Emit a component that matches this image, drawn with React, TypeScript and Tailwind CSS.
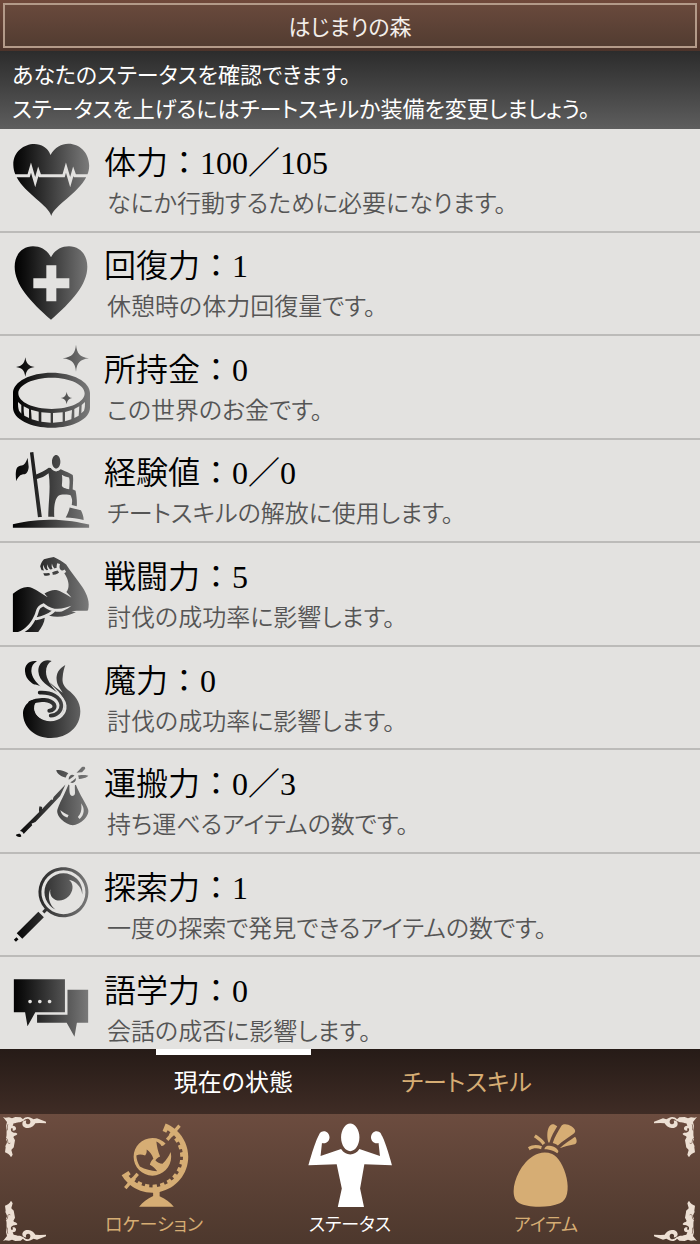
import { useState } from 'react'
import type { ReactNode } from 'react'
import {
  GiBiceps, GiBindle, GiConqueror, GiGlobe, GiHeartBeats,
  GiMagnifyingGlass, GiStrong, GiSwapBag, GiTalk,
} from 'react-icons/gi'

interface Stat {
  name: string
  value: string
  note: string
  icon: ReactNode
}

const INK = 'size-[82px] fill-[url(#ink)]'

// Shared gradients: one for the 512-unit icon set, one for the icons drawn here
function Gradients() {
  const stops = (
    <>
      <stop offset="0" stopColor="#000" />
      <stop offset="0.15" stopColor="#101010" />
      <stop offset="1" stopColor="#7c7c7c" />
    </>
  )
  return (
    <svg className="absolute size-0" aria-hidden="true">
      <defs>
        <linearGradient id="ink" gradientUnits="userSpaceOnUse" x1="10" y1="0" x2="500" y2="0">{stops}</linearGradient>
        <linearGradient id="inkSmall" gradientUnits="userSpaceOnUse" x1="15" y1="0" x2="245" y2="0">{stops}</linearGradient>
      </defs>
    </svg>
  )
}

function HeartPlusIcon() {
  return (
    <svg viewBox="0 0 246 246" className="size-[82px]">
      <path
        fill="url(#inkSmall)"
        fillRule="evenodd"
        d="M123 46C111 23 91 13 69 13 35 13 14 40 14 74c0 54 47 105 109 159 62-54 109-105 109-159 0-34-21-61-55-61-22 0-42 10-54 33ZM109 70h30v39h39v30h-39v39h-30v-39H70v-30h39Z"
      />
    </svg>
  )
}

function CoinIcon() {
  return (
    <svg viewBox="0 0 252 264" className="h-[88px] w-[84px] shrink-0">
      <g fill="url(#inkSmall)">
        <path d="M201 5c3 26 10 36 39 41-29 4-36 14-39 40-3-26-10-36-40-40 30-5 37-15 40-41Z" />
        <path d="M49 43c3 19 9 26 28 29-19 3-25 10-28 29-3-19-9-26-28-29 19-3 25-10 28-29Z" />
        <path d="M173 146c2 12 6 17 17 19-11 2-15 7-17 19-2-12-6-17-18-19 12-2 16-7 18-19Z" />
        <path
          fillRule="evenodd"
          d="M128 89c63 0 115 27 115 61v44c0 34-52 60-115 60S12 228 12 194v-44c0-34 53-61 116-61Zm0 15c-55 0-100 21-100 47 0 27 45 47 100 47s99-20 99-47c0-26-44-47-99-47Z"
        />
      </g>
      <g fill="#e3e2e0">
        <path d="M27 177 37 186v26l-7-9c-3-8-3-17-3-26Z" />
        <path d="M44 190l16 8v27l-14-7c-2-9-2-18-2-28Z" />
        <path d="M66 200l23 6v29l-21-6Z" />
        <path d="M97 208l28 2v29l-28-3Z" />
        <path d="M132 210l29-2v28l-29 3Z" />
        <path d="M168 207l21-6-2 28-19 6Z" />
        <path d="M196 198l15-8-2 28-13 7Z" />
        <path d="M218 186l10-9c0 9 0 18-3 26l-8 8Z" />
      </g>
    </svg>
  )
}

function SwirlIcon() {
  return (
    <svg viewBox="0 0 216 270" className="h-[90px] w-[72px]">
      <g fill="url(#inkSmall)">
        <path d="M66 25C48 20 28 32 30 55c2 27 22 40 49 48C64 88 50 73 49 54c0-14 6-23 17-29Z" />
        <path d="M110 24C88 16 69 31 70 55c2 32 32 45 57 64-18-22-34-40-34-63 0-15 6-26 17-32Z" />
        <path d="M151 36c-20 11-28 27-26 45 1 15 10 25 18 38-14-10-30-22-40-32 12 18 46 36 46 68 0 28-19 47-45 47-25 0-44-14-46-35-1-11 3-19 9-25-14-6-27 4-36 16-5 8-7 14-7 22 0 44 36 75 84 75 51 0 88-34 88-80 0-29-18-50-37-64-14-11-18-23-16-38 1-15 4-26 8-37Z" />
      </g>
      <path
        fill="none"
        stroke="#e3e2e0"
        strokeWidth="7"
        strokeLinecap="round"
        d="M60 98c28 9 86 18 91 60 2 24-18 43-45 43-23 0-43-14-45-34-1-12 8-23 24-21"
      />
      <path
        fill="none"
        stroke="url(#inkSmall)"
        strokeWidth="11"
        strokeLinecap="round"
        d="M74 119c36-2 62 13 65 37 1 17-13 31-32 32"
      />
      <path
        fill="none"
        stroke="url(#inkSmall)"
        strokeWidth="12"
        strokeLinecap="round"
        d="M46 149c28-14 62-9 71 5 5 10-3 19-14 19"
      />
    </svg>
  )
}

// Filigree for one corner of the bottom bar; the other three are mirrored
function Corner({ className }: { className: string }) {
  return (
    <svg viewBox="0 8 144 144" className={`absolute size-12 ${className}`} aria-hidden="true">
      <path
        fill="#ecdfd3"
        d="M9 17l7 2 11-1 9 3 10-4 16 1 7 6c5-7 15-9 23-5l9 5 10-3 27 10v5l-19-1-13 1c-4 8-13 15-23 14-10 0-16-6-16-13 0-6 6-10 12-9-3 5-1 10 5 11 6 0 9-6 6-12-3-7-13-6-19 1l-11 5c-6-2-13 3-19 3l-3 7c7 0 11 4 10 10-2 5-7 6-11 4 3-3 2-6-2-7-4 4-3 9 2 12 7 4 14 1 15 6-2 6-9 4-12 9l5 10-3 16c0 8-5 7-8 13l4 14-5 8c-3-8-12-12-18-15l2-15c-3-5 4-10 4-17-1-5-4-6-3-12 3-6 1-14 2-22l-2-13 3-12Z"
      />
      <path fill="none" stroke="#634638" strokeWidth="2" strokeLinecap="round" d="M23 40c-3 6 1 10-1 16M13 79c7-1 10 5 10 11s4 8 7 6" />
    </svg>
  )
}

const STATS: Stat[] = [
  { name: '体力',   value: '100／105', note: 'なにか行動するために必要になります。',       icon: <GiHeartBeats className={INK} /> },
  { name: '回復力', value: '1',        note: '休憩時の体力回復量です。',                   icon: <HeartPlusIcon /> },
  { name: '所持金', value: '0',        note: 'この世界のお金です。',                       icon: <CoinIcon /> },
  { name: '経験値', value: '0／0',     note: 'チートスキルの解放に使用します。',           icon: <GiConqueror className={INK} /> },
  { name: '戦闘力', value: '5',        note: '討伐の成功率に影響します。',                 icon: <GiBiceps className={INK} /> },
  { name: '魔力',   value: '0',        note: '討伐の成功率に影響します。',                 icon: <SwirlIcon /> },
  { name: '運搬力', value: '0／3',     note: '持ち運べるアイテムの数です。',               icon: <GiBindle className={INK} /> },
  { name: '探索力', value: '1',        note: '一度の探索で発見できるアイテムの数です。',   icon: <GiMagnifyingGlass className={INK} /> },
  { name: '語学力', value: '0',        note: '会話の成否に影響します。',                   icon: <GiTalk className={INK} /> },
]

const TABS = ['現在の状態', 'チートスキル']

const NAV = [
  { label: 'ロケーション', Icon: GiGlobe },
  { label: 'ステータス',   Icon: GiStrong },
  { label: 'アイテム',     Icon: GiSwapBag },
]

export default function App() {
  const [tab, setTab] = useState(0)
  const [page, setPage] = useState(1)

  return (
    <div className="flex h-screen flex-col bg-[#e3e2e0] font-['Liberation_Serif','Noto_Sans_CJK_JP',serif]">
      <Gradients />

      <header className="shrink-0 bg-linear-to-b from-[#70493b] to-[#4c332a] p-[3px]">
        <h1 className="border-2 border-[#b39a89] bg-linear-to-b from-[#69493c] to-[#523c31] pt-[6px] pb-[2px] text-center text-[22px] leading-[33px] text-[#f3eeea] [font-feature-settings:'palt']">
          はじまりの森
        </h1>
      </header>

      <p className="shrink-0 bg-linear-to-b from-[#2c2c2c] to-[#5e5e5e] px-3 pt-2 pb-[2px] text-[22px] leading-[34px] text-white [font-feature-settings:'palt']">
        あなたのステータスを確認できます。<br />
        ステータスを上げるにはチートスキルか装備を変更しましょう。
      </p>

      {/* Stats */}
      <main className="min-h-0 flex-1 overflow-hidden">
        <ul className="grid min-h-[932px] auto-rows-fr">
          {STATS.map(s => (
            <li key={s.name} className="flex items-center border-b-2 border-[#bcbbb9] pl-[10px]">
              <div className="flex w-[82px] shrink-0 items-center justify-center">{s.icon}</div>
              <div className="min-w-0 pt-2 pl-3">
                <h2 className="text-[32px] leading-10 font-[350] text-black">{s.name}：{s.value}</h2>
                <p className="pl-[3px] text-2xl leading-[42px] font-[350] text-[#555] [font-feature-settings:'palt']">{s.note}</p>
              </div>
            </li>
          ))}
        </ul>
      </main>

      {/* Tabs */}
      <div className="grid shrink-0 grid-cols-9 bg-linear-to-b from-[#261b17] to-[#3f2c25]">
        {TABS.map((t, i) => (
          <button
            key={t}
            onClick={() => setTab(i)}
            className={`col-span-2 h-[65px] border-t-[6px] pb-1 text-2xl whitespace-nowrap [font-feature-settings:'palt']
              ${i === 0 ? 'col-start-3' : 'col-start-6'}
              ${i === tab ? 'border-white text-white' : 'border-transparent text-[#d6ad74]'}`}
          >
            {t}
          </button>
        ))}
      </div>

      {/* Bottom navigation */}
      <nav className="relative grid shrink-0 grid-cols-3 bg-linear-to-b from-[#6c4c3f] to-[#4d382d] px-14 pt-[6px] pb-1">
        <Corner className="top-0 left-0" />
        <Corner className="top-0 right-0 -scale-x-100" />
        <Corner className="bottom-0 left-0 -scale-y-100" />
        <Corner className="right-0 bottom-0 -scale-100" />
        {NAV.map(({ label, Icon }, i) => (
          <button
            key={label}
            onClick={() => setPage(i)}
            className={`flex flex-col items-center ${i === page ? 'text-white' : 'text-[#d6ad74]'}`}
          >
            <Icon className="size-[90px]" />
            <span className="text-lg leading-[30px] [font-feature-settings:'palt']">{label}</span>
          </button>
        ))}
      </nav>
    </div>
  )
}
